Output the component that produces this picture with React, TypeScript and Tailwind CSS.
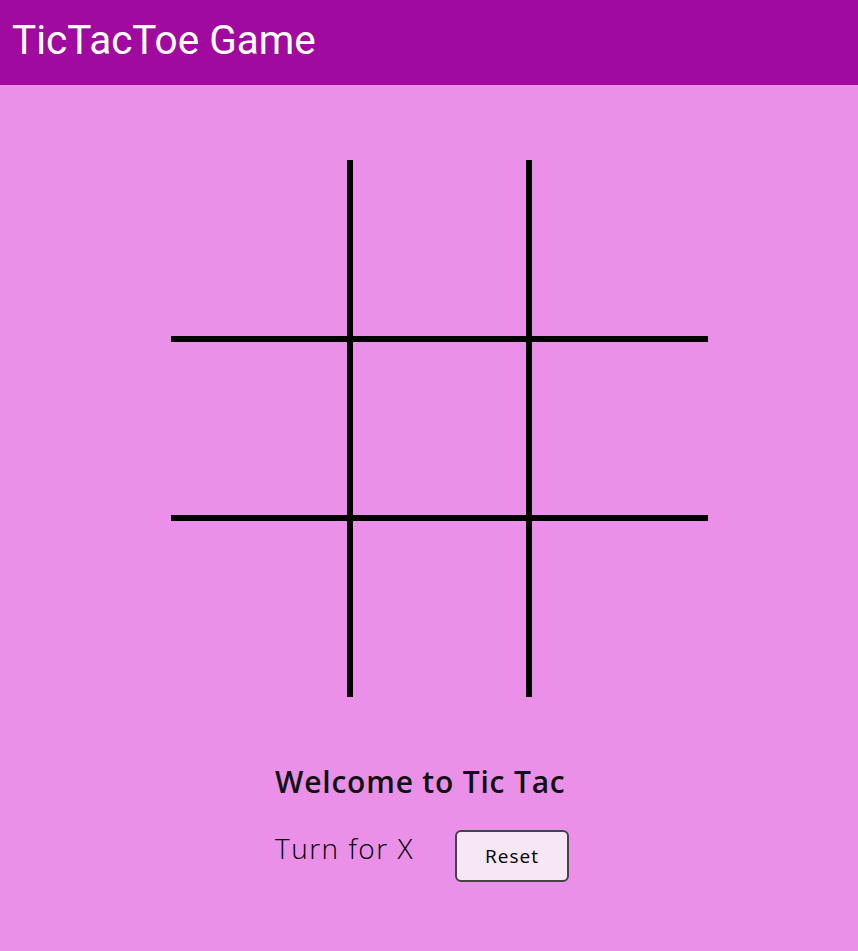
import { useState } from "react";

const cellBorders = [
  "border-r-[3px] border-b-[3px]",
  "border-x-[3px] border-b-[3px]",
  "border-l-[3px] border-b-[3px]",
  "border-r-[3px] border-y-[3px]",
  "border-[3px]",
  "border-l-[3px] border-y-[3px]",
  "border-r-[3px] border-t-[3px]",
  "border-x-[3px] border-t-[3px]",
  "border-l-[3px] border-t-[3px]",
];

export default function App() {
  const [cells, setCells] = useState<string[]>(Array(9).fill(""));
  const [turn, setTurn] = useState("X");

  const play = (i: number) => {
    if (cells[i]) return;
    const next = [...cells];
    next[i] = turn;
    setCells(next);
    setTurn(turn === "X" ? "O" : "X");
  };

  return (
    <div className="min-h-[951px] bg-[#ea90e8]">
      <header className="h-[85px] bg-[#a10a9f] flex items-center px-3">
        <h1 className="text-white text-[40.5px] leading-none pb-1" style={{ fontFamily: "Roboto, sans-serif" }}>
          TicTacToe Game
        </h1>
      </header>

      <div className="pt-[75px] pl-[171px]">
        <div className="grid grid-cols-[179px_179px_179px] grid-rows-[179px_179px_179px]">
          {cells.map((c, i) => (
            <button
              key={i}
              onClick={() => play(i)}
              className={`border-black ${cellBorders[i]} flex items-center justify-center text-6xl`}
              style={{ fontFamily: "'Open Sans', sans-serif" }}
            >
              {c}
            </button>
          ))}
        </div>
      </div>

      <div className="pl-[275px] pt-[70px]" style={{ fontFamily: "'Open Sans', sans-serif" }}>
        <h2 className="text-[30px] font-semibold text-[#111] leading-none tracking-[0.8px]">Welcome to Tic Tac</h2>
        <div className="flex items-start mt-[33px]">
          <p className="text-[28px] font-light text-black w-[180px] leading-none mt-[4px] tracking-[1.5px]">Turn for {turn}</p>
          <button
            onClick={() => {
              setCells(Array(9).fill(""));
              setTurn("X");
            }}
            className="w-[114px] h-[52px] rounded-md border-2 border-[#444] bg-[#f6e6f6] text-[19px] text-black tracking-[1px]"
          >
            Reset
          </button>
        </div>
      </div>
    </div>
  );
}
